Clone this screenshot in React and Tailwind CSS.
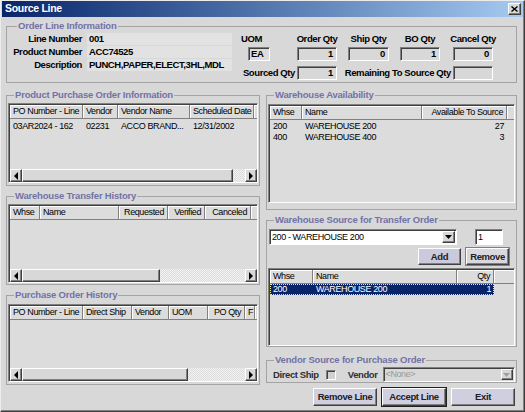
import React from "react";

const raised =
  "border border-t-white border-l-white border-r-[#404040] border-b-[#404040] shadow-[inset_-1px_-1px_0_#808080]";
const sunken =
  "border border-t-[#808080] border-l-[#808080] border-r-white border-b-white shadow-[inset_1px_1px_0_#404040]";
const label = "text-[9.5px] font-bold leading-[12px] tracking-[-0.4px] whitespace-nowrap";
const small = "text-[9px] leading-[11px] tracking-[-0.4px] whitespace-nowrap";

function Group({ title, className = "", legendClass = "ml-[6px]", children }) {
  return (
    <fieldset className={`min-w-0 border border-[#a4a4a4] px-[1px] ${className}`}>
      <legend
        className={`${legendClass} px-[1px] text-[9.5px] font-bold leading-[12px] tracking-[-0.2px] text-[#7272a6]`}
      >
        {title}
      </legend>
      {children}
    </fieldset>
  );
}

function Arrow({ dir }) {
  const d = {
    left: "M5 0 L1 4 L5 8 Z",
    right: "M1 0 L5 4 L1 8 Z",
    down: "M0 1 L7 1 L3.5 5 Z",
  }[dir];
  const size = dir === "down" ? { w: 7, h: 6 } : { w: 6, h: 8 };
  return (
    <svg width={size.w} height={size.h} viewBox={`0 0 ${size.w} ${size.h}`}>
      <path d={d} fill="currentColor" />
    </svg>
  );
}

function ScrollBtn({ dir }) {
  return (
    <div className={`flex w-[12px] shrink-0 items-center justify-center bg-[#d8d8d8] text-black ${raised}`}>
      <Arrow dir={dir} />
    </div>
  );
}

function HScroll({ thumb }) {
  return (
    <div className="flex h-[13px] shrink-0">
      <ScrollBtn dir="left" />
      <div className={`${thumb} shrink-0 bg-[#d8d8d8] ${raised}`} />
      <div className="flex-1 bg-[image:repeating-conic-gradient(#f2f2f2_0_25%,#dcdcdc_0_50%)] bg-[length:2px_2px]" />
      <ScrollBtn dir="right" />
    </div>
  );
}

function ListView({ cols, rows = [], className = "", thumb, selected = -1, bodyPad = "pt-[1px]" }) {
  return (
    <div className={`flex flex-col overflow-hidden bg-[#dcdcdc] ${sunken} ${className}`}>
      <div className="ml-[1px] mt-[1px] flex h-[14px] shrink-0">
        {cols.map((c, i) => (
          <div
            key={i}
            className={`${c.w} h-[14px] shrink-0 overflow-hidden border-r border-b border-r-[#808080] border-b-[#808080] shadow-[inset_1px_1px_0_#fff] px-[3px] ${small} leading-[13px] ${
              c.r ? "text-right" : ""
            }`}
          >
            {c.l}
          </div>
        ))}
        <div className="h-[14px] flex-1 border-b border-b-[#808080] shadow-[inset_1px_1px_0_#fff]" />
      </div>
      <div className={`ml-[1px] flex-1 ${bodyPad}`}>
        {rows.map((row, ri) => (
          <div key={ri} className="flex h-[11px]">
            <div
              className={`flex ${
                ri === selected
                  ? "bg-[#0a246a] text-white outline-1 outline-dotted outline-[#e8e8a0] -outline-offset-1"
                  : ""
              }`}
            >
              {cols.map((c, ci) => (
                <div
                  key={ci}
                  className={`${c.w} shrink-0 overflow-hidden px-[3px] ${small} ${c.r ? "text-right" : ""}`}
                >
                  {row[ci]}
                </div>
              ))}
            </div>
          </div>
        ))}
      </div>
      {thumb && (
        <div className="ml-[1px]">
          <HScroll thumb={thumb} />
        </div>
      )}
    </div>
  );
}

function QtyField({ value, className = "" }) {
  return (
    <div className={`h-[14px] w-[40px] bg-[#d8d8d8] pr-[3px] text-right ${label} ${sunken} ${className}`}>
      {value}
    </div>
  );
}

function Btn({ children, className = "" }) {
  return (
    <button
      className={`flex items-center justify-center ${label} text-[#202020] ${raised} ${className}`}
    >
      {children}
    </button>
  );
}

function OrderLine() {
  const rows = [
    ["Line Number", "001"],
    ["Product Number", "ACC74525"],
    ["Description", "PUNCH,PAPER,ELECT,3HL,MDL"],
  ];
  return (
    <Group title="Order Line Information" legendClass="ml-[9px]" className="mt-[3px] h-[63px]">
      <div className="flex">
        <div className="mt-[1px] flex w-[224px] flex-col gap-[1px]">
          {rows.map(([k, v]) => (
            <div key={k} className="flex h-[12px] items-center">
              <div className={`w-[74px] text-right ${label}`}>{k}</div>
              <div className={`ml-[5px] h-[12px] w-[145px] bg-[#e2e2e2] pl-[2px] ${label}`}>{v}</div>
            </div>
          ))}
        </div>
        <div className="ml-[9px] flex flex-col">
          <div className="mt-[1px] flex h-[12px]">
            <div className={`w-[56px] ${label}`}>UOM</div>
            <div className={`flex w-[40px] justify-center ${label}`}>Order Qty</div>
            <div className={`ml-[11px] flex w-[41px] justify-center ${label}`}>Ship Qty</div>
            <div className={`ml-[11px] flex w-[40px] justify-center ${label}`}>BO Qty</div>
            <div className={`ml-[13px] flex w-[40px] justify-center ${label}`}>Cancel Qty</div>
          </div>
          <div className="mt-[2px] flex">
            <div className="w-[56px] pl-[7px]">
              <div className={`h-[14px] w-[22px] bg-[#dcdcdc] pl-[2px] ${label} ${sunken}`}>EA</div>
            </div>
            <QtyField value="1" />
            <QtyField value="0" className="ml-[11px] w-[41px]" />
            <QtyField value="1" className="ml-[11px]" />
            <QtyField value="0" className="ml-[13px]" />
          </div>
          <div className="mt-[5px] flex items-center">
            <div className={`w-[56px] pr-[2px] text-right ${label}`}>Sourced Qty</div>
            <QtyField value="1" />
            <div className={`w-[116px] pr-[2px] text-right ${label}`}>Remaining To Source Qty</div>
            <QtyField value="" />
          </div>
        </div>
      </div>
    </Group>
  );
}

export default function App() {
  return (
    <div className="h-[412px] w-[525px] overflow-hidden border border-t-[#ececec] border-l-[#ececec] border-r-[#404040] border-b-[#404040] bg-[#d8d8d8] font-['Liberation_Sans',Arial,sans-serif] text-black shadow-[inset_-1px_-1px_0_#808080]">
      <div className="mx-[1px] flex h-[16px] items-center justify-between bg-linear-to-r from-[#0a246a] to-[#a6caf0] pl-[3px] pr-[2px]">
        <span className="text-[10.5px] font-bold tracking-[-0.3px] text-white">Source Line</span>
        <div className={`flex h-[12px] w-[13px] items-center justify-center bg-[#d8d8d8] ${raised}`}>
          <svg width="7" height="6" viewBox="0 0 7 6">
            <path d="M0.5 0.5L6.5 5.5M6.5 0.5L0.5 5.5" stroke="black" strokeWidth="1.4" />
          </svg>
        </div>
      </div>

      <div className="pl-[5px] pr-[7px]">
        <OrderLine />

        <div className="mt-[6px] flex gap-[6px]">
          <div className="flex w-[254px] shrink-0 flex-col">
            <Group title="Product Purchase Order Information" className="h-[97px]">
              <ListView
                className="mt-[2px] h-[80px]"
                bodyPad="pt-[2px]"
                cols={[
                  { l: "PO Number - Line", w: "w-[73px]" },
                  { l: "Vendor", w: "w-[35px]" },
                  { l: "Vendor Name", w: "w-[72px]" },
                  { l: "Scheduled Date", w: "w-[64px]" },
                ]}
                rows={[["03AR2024 - 162", "02231", "ACCO BRAND...", "12/31/2002"]]}
                thumb="w-[211px]"
              />
            </Group>
            <Group title="Warehouse Transfer History" className="mt-[4px] h-[95px]">
              <ListView
                className="mt-[2px] h-[79px]"
                cols={[
                  { l: "Whse", w: "w-[30px]" },
                  { l: "Name", w: "w-[79px]" },
                  { l: "Requested", w: "w-[49px]", r: true },
                  { l: "Verified", w: "w-[37px]", r: true },
                  { l: "Canceled", w: "w-[46px]", r: true },
                ]}
                thumb="w-[138px]"
              />
            </Group>
            <Group title="Purchase Order History" className="mt-[4px] h-[96px]">
              <ListView
                className="mt-[3px] h-[78px]"
                cols={[
                  { l: "PO Number - Line", w: "w-[73px]" },
                  { l: "Direct Ship", w: "w-[49px]" },
                  { l: "Vendor", w: "w-[37px]" },
                  { l: "UOM", w: "w-[39px]" },
                  { l: "PO Qty", w: "w-[37px]", r: true },
                  { l: "F", w: "w-[10px]" },
                ]}
                thumb="w-[166px]"
              />
            </Group>
          </div>

          <div className="flex flex-1 flex-col">
            <Group title="Warehouse Availability" className="h-[121px]">
              <ListView
                className="mt-[3px] h-[99px]"
                cols={[
                  { l: "Whse", w: "w-[32px]" },
                  { l: "Name", w: "w-[120px]" },
                  { l: "Available To Source", w: "w-[85px]", r: true },
                ]}
                rows={[
                  ["200", "WAREHOUSE 200", "27"],
                  ["400", "WAREHOUSE 400", "3"],
                ]}
              />
            </Group>

            <Group title="Warehouse Source for Transfer Order" className="mt-[4px] h-[133px]">
              <div className="mt-[3px] flex h-[16px] items-center pl-[1px]">
                <div className={`flex h-[16px] w-[188px] items-center bg-white ${sunken}`}>
                  <span className={`flex-1 pl-[2px] ${small}`}>200 - WAREHOUSE 200</span>
                  <div className={`mr-[1px] flex h-[12px] w-[13px] items-center justify-center bg-[#d8d8d8] ${raised}`}>
                    <Arrow dir="down" />
                  </div>
                </div>
                <div className={`ml-[18px] h-[16px] w-[28px] bg-white pl-[2px] ${small} leading-[14px] ${sunken}`}>
                  1
                </div>
              </div>
              <div className="mt-[3px] flex h-[17px] justify-end gap-[5px] pr-[6px]">
                <Btn className="w-[43px] bg-[#cacadc]">Add</Btn>
                <Btn className="w-[43px] bg-[#d8d8de] outline outline-1 outline-[#808080]">Remove</Btn>
              </div>
              <ListView
                className="mt-[3px] h-[78px]"
                bodyPad="pt-0"
                cols={[
                  { l: "Whse", w: "w-[43px]" },
                  { l: "Name", w: "w-[144px]" },
                  { l: "Qty", w: "w-[37px]", r: true },
                ]}
                rows={[["200", "WAREHOUSE 200", "1"]]}
                selected={0}
              />
            </Group>

            <Group title="Vendor Source for Purchase Order" className="mt-[7px] h-[29px]">
              <div className="mt-[1px] flex h-[15px] items-center pl-[5px]">
                <span className={`${label} text-[#303030]`}>Direct Ship</span>
                <div className={`ml-[7px] h-[10px] w-[10px] bg-[#d0d0d0] ${sunken}`} />
                <span className={`ml-[12px] ${label} text-[#303030]`}>Vendor</span>
                <div className={`ml-[5px] flex h-[15px] w-[132px] items-center bg-[#d8d8d8] ${sunken}`}>
                  <span className={`flex-1 pl-[2px] ${small} text-[#9a9a9a]`}>&lt;None&gt;</span>
                  <div className={`mr-[1px] flex h-[11px] w-[12px] items-center justify-center bg-[#d8d8d8] text-[#a0a0a0] ${raised}`}>
                    <Arrow dir="down" />
                  </div>
                </div>
              </div>
            </Group>

            <div className="mt-[5px] flex h-[18px] justify-end gap-[5px] pr-[2px]">
              <Btn className="w-[64px] bg-[#cfcfe0]">Remove Line</Btn>
              <Btn className="w-[64px] bg-[#cfcfe0] outline outline-1 outline-[#202020]">Accept Line</Btn>
              <Btn className="w-[64px] bg-[#cfcfe0]">Exit</Btn>
            </div>
          </div>
        </div>
      </div>
    </div>
  );
}
